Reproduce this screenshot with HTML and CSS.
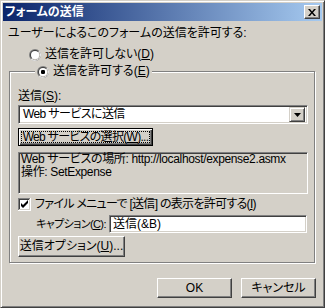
FILE: index.html
```
<!DOCTYPE html>
<html lang="ja">
<head>
  <meta charset="UTF-8">
  <title>フォームの送信</title>
  <link rel="stylesheet" href="styles.css">
</head>
<body>

<div class="window">
  <!-- タイトルバー -->
  <div class="titlebar">
    <span class="title">フォームの送信</span>
    <span class="close">
      <svg width="8" height="7" viewBox="0 0 8 7"><path d="M0 0h2l2 2.5L6 0h2L5 3.5 8 7H6L4 4.5 2 7H0l3-3.5z" fill="#000"/></svg>
    </span>
  </div>

  <div class="content">
    <div class="intro">ユーザーによるこのフォームの送信を許可する:</div>

    <div class="radio-row first">
      <svg class="radio" width="12" height="12" viewBox="0 0 12 12">
        <circle cx="6" cy="6" r="6" fill="#808080"/>
        <path d="M10.24 1.76A6 6 0 0 1 1.76 10.24Z" fill="#fff"/>
        <circle cx="6" cy="6" r="5" fill="#404040"/>
        <path d="M9.54 2.46A5 5 0 0 1 2.46 9.54Z" fill="#d4d0c8"/>
        <circle cx="6" cy="6" r="4" fill="#fff"/>
      </svg>
      <span>送信を許可しない(<u>D</u>)</span>
    </div>

    <div class="group">
      <div class="radio-row legend">
        <svg class="radio" width="12" height="12" viewBox="0 0 12 12">
          <circle cx="6" cy="6" r="6" fill="#808080"/>
          <path d="M10.24 1.76A6 6 0 0 1 1.76 10.24Z" fill="#fff"/>
          <circle cx="6" cy="6" r="5" fill="#404040"/>
          <path d="M9.54 2.46A5 5 0 0 1 2.46 9.54Z" fill="#d4d0c8"/>
          <circle cx="6" cy="6" r="4" fill="#fff"/>
          <rect x="4" y="4" width="4" height="4" rx="1.2" fill="#000"/>
        </svg>
        <span>送信を許可する(<u>E</u>)</span>
      </div>

      <div class="field-label">送信(<u>S</u>):</div>
      <div class="combo">
        <span class="combo-text">Web サービスに送信</span>
        <span class="combo-btn">
          <svg width="7" height="4" viewBox="0 0 7 4"><path d="M0 0h7L3.5 4z" fill="#000"/></svg>
        </span>
      </div>

      <button class="btn default select-btn"><span class="focus">Web サービスの選択(<u>W</u>)...</span></button>

      <div class="info">
        <div>Web サービスの場所: http://localhost/expense2.asmx</div>
        <div>操作: SetExpense</div>
      </div>

      <div class="check-row">
        <svg class="check" width="13" height="13" viewBox="0 0 13 13">
          <rect width="13" height="13" fill="#fff"/>
          <path d="M0 0h12v1H1v11H0z" fill="#808080"/>
          <path d="M1 1h10v1H2v9H1z" fill="#404040"/>
          <path d="M12 0h1v13H0v-1h12z" fill="#fff"/>
          <path d="M11 1h1v11H1v-1h10z" fill="#d4d0c8"/>
          <path d="M3 5v3l2 2 5-5V2L5 7z" fill="#000"/>
        </svg>
        <span class="check-text">ファイル メニューで [送信] の表示を許可する(<u>I</u>)</span>
      </div>

      <div class="caption-row">
        <span class="caption-label">キャプション(<u>C</u>):</span>
        <div class="textbox">送信(&amp;B)</div>
      </div>

      <button class="btn options-btn">送信オプション(<u>U</u>)...</button>
    </div>

    <div class="footer">
      <button class="btn action">OK</button>
      <button class="btn action">キャンセル</button>
    </div>
  </div>
</div>

</body>
</html>
```

FILE: styles.css
```
* {
  box-sizing: border-box;
}
body {
  margin: 0;
  background-color: #d4d0c8;
  font-family: "Liberation Sans", "Noto Sans CJK JP", sans-serif;
  font-size: 12px;
  font-feature-settings: "palt";
  color: #000;
  white-space: nowrap;
}
u {
  text-decoration: underline;
}
.window {
  width: 325px;
  height: 308px;
  background-color: #d4d0c8;
  border: 1px solid;
  border-color: #d4d0c8 #404040 #404040 #d4d0c8;
  box-shadow: inset 1px 1px #fff, inset -1px -1px #808080;
  padding: 2px;
  display: flex;
  flex-direction: column;
}
.titlebar {
  height: 18px;
  flex-shrink: 0;
  background: linear-gradient(to right, #0a246a, #a6caf0);
  display: flex;
  align-items: center;
  justify-content: space-between;
  padding: 0 2px 0 2px;
}
.title {
  color: #fff;
  font-weight: bold;
  line-height: 18px;
}
.close {
  width: 16px;
  height: 14px;
  background-color: #d4d0c8;
  border: 1px solid;
  border-color: #fff #404040 #404040 #fff;
  box-shadow: inset -1px -1px #808080;
  display: flex;
  align-items: center;
  justify-content: center;
  padding-right: 1px;
}
.content {
  display: flex;
  flex-direction: column;
  flex: 1;
}
.intro {
  margin: 6px 0 0 5px;
  line-height: 13px;
  height: 13px;
}
.radio-row {
  display: flex;
  align-items: center;
  gap: 4px;
  height: 17px;
  line-height: 13px;
}
.radio-row.first {
  margin: 6px 0 0 26px;
}
.group {
  margin: 8px 0 0 6px;
  width: 306px;
  height: 192px;
  flex-shrink: 0;
  border: 1px solid #808080;
  box-shadow: 1px 1px #fff, inset 1px 1px #fff;
  display: flex;
  flex-direction: column;
  align-items: flex-start;
  padding: 0 0 0 8px;
}
.radio-row.legend {
  margin: -9px 0 0 17px;
  padding: 0 2px;
  background-color: #d4d0c8;
}
.field-label {
  margin-top: 10px;
  line-height: 13px;
  height: 13px;
}
.combo {
  margin-top: 2px;
  width: 290px;
  height: 19px;
  flex-shrink: 0;
  background-color: #fff;
  border: 1px solid;
  border-color: #808080 #fff #fff #808080;
  box-shadow: inset 1px 1px #404040, inset -1px -1px #d4d0c8;
  display: flex;
  align-items: center;
  justify-content: space-between;
  padding: 2px;
}
.combo-text {
  padding-left: 2px;
  line-height: 13px;
  letter-spacing: -0.6px;
}
.combo-btn {
  width: 16px;
  height: 15px;
  background-color: #d4d0c8;
  border: 1px solid;
  border-color: #d4d0c8 #404040 #404040 #d4d0c8;
  box-shadow: inset 1px 1px #fff, inset -1px -1px #808080;
  display: flex;
  align-items: center;
  justify-content: center;
}
.btn {
  font: inherit;
  color: #000;
  background-color: #d4d0c8;
  border: 1px solid;
  border-color: #fff #404040 #404040 #fff;
  box-shadow: inset -1px -1px #808080;
  padding: 0;
  margin: 0;
  display: flex;
  align-items: center;
  justify-content: center;
  line-height: 13px;
  white-space: nowrap;
  flex-shrink: 0;
}
.btn.default {
  border: 1px solid #000;
  box-shadow: inset 1px 1px #fff, inset -1px -1px #404040, inset -2px -2px #808080;
}
.select-btn {
  margin-top: 4px;
  width: 135px;
  height: 18px;
  letter-spacing: -0.7px;
}
.focus {
  border: 1px dotted #000;
  padding: 0 1px;
  line-height: 11px;
  height: 12px;
}
.info {
  margin-top: 6px;
  width: 290px;
  height: 42px;
  flex-shrink: 0;
  border: 1px solid;
  border-color: #808080 #fff #fff #808080;
  box-shadow: inset 1px 1px #404040, inset -1px -1px #d4d0c8;
  padding: 0 2px;
  line-height: 13px;
  letter-spacing: -0.35px;
}
.check-row {
  margin-top: 4px;
  display: flex;
  align-items: center;
  gap: 4px;
  height: 13px;
  line-height: 13px;
}
.check-text {
  letter-spacing: -0.7px;
}
.caption-row {
  margin-top: 4px;
  display: flex;
  align-items: center;
  height: 18px;
}
.caption-label {
  margin-left: 18px;
  width: 73px;
  flex-shrink: 0;
  font-size: 11px;
  letter-spacing: -0.6px;
  line-height: 13px;
}
.textbox {
  width: 198px;
  height: 18px;
  flex-shrink: 0;
  background-color: #fff;
  border: 1px solid;
  border-color: #808080 #fff #fff #808080;
  box-shadow: inset 1px 1px #404040, inset -1px -1px #d4d0c8;
  padding: 2px 3px;
  line-height: 13px;
}
.options-btn {
  margin-top: 3px;
  width: 107px;
  height: 21px;
}
.footer {
  margin-top: 15px;
  display: flex;
  justify-content: flex-end;
  gap: 9px;
  padding-right: 6px;
}
.action {
  width: 75px;
  height: 20px;
}
```
